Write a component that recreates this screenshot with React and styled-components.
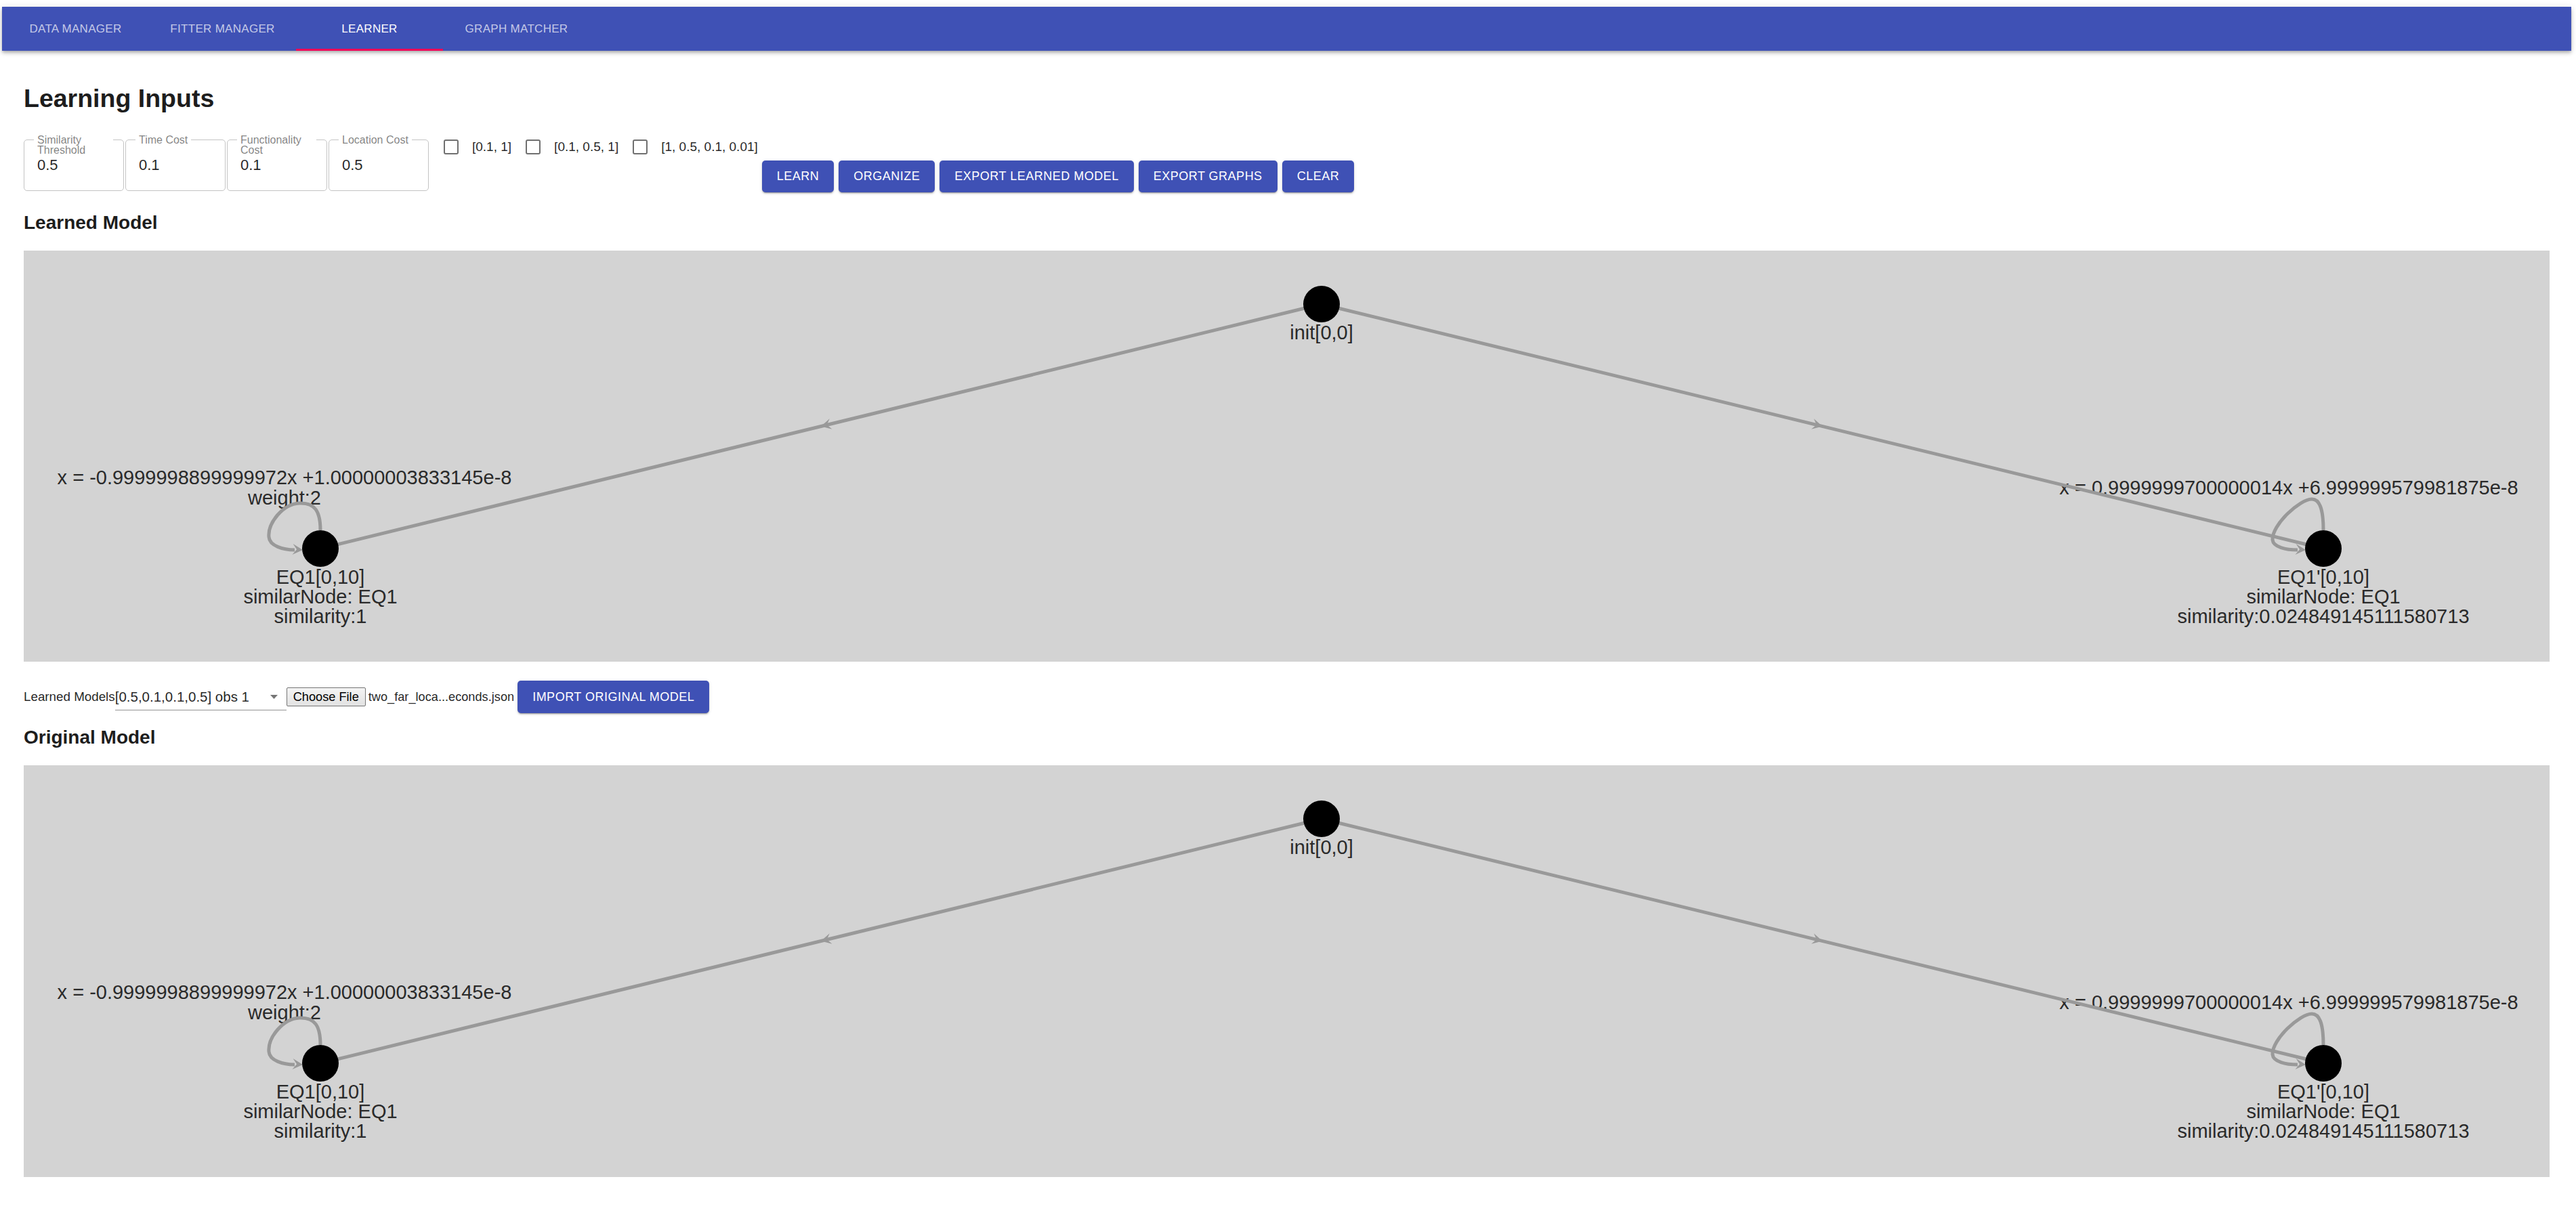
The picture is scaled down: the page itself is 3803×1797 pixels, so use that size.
import React from "react";
import styled, { createGlobalStyle } from "styled-components";

const GlobalStyle = createGlobalStyle`
  body {
    margin: 0;
    background: #fff;
    font-family: "Liberation Sans", Arial, sans-serif;
    color: rgba(0, 0, 0, 0.87);
  }
`;

const TABS = ["Data Manager", "Fitter Manager", "Learner", "Graph Matcher"];

const FIELDS = [
  { label: "Similarity Threshold", value: "0.5" },
  { label: "Time Cost", value: "0.1" },
  { label: "Functionality Cost", value: "0.1" },
  { label: "Location Cost", value: "0.5" },
];

const CHECKS = ["[0.1, 1]", "[0.1, 0.5, 1]", "[1, 0.5, 0.1, 0.01]"];

const ACTIONS = ["Learn", "Organize", "Export Learned Model", "Export Graphs", "Clear"];

const NODES = [
  { id: "init", x: 1916, y: 79, lines: ["init[0,0]"] },
  {
    id: "eq1",
    x: 438,
    y: 440,
    lines: ["EQ1[0,10]", "similarNode: EQ1", "similarity:1"],
    loop: "M 0 -27 C 0 -55, -8 -68, -31 -67 C -55 -66, -78 -38, -76 -17 C -75 -4, -55 2, -38 2",
  },
  {
    id: "eq1p",
    x: 3395,
    y: 440,
    lines: ["EQ1'[0,10]", "similarNode: EQ1", "similarity:0.024849145111580713"],
    loop: "M 0 -27 C 0 -60, -6 -73, -17 -73 C -35 -73, -76 -35, -75 -13 C -74 -2, -55 2, -38 2",
  },
];

const EDGES = [
  { from: "init", to: "eq1" },
  { from: "init", to: "eq1p" },
];

const EDGE_LABELS = [
  { x: 385, y: 345, lines: ["x = -0.9999998899999972x +1.00000003833145e-8", "weight:2"] },
  { x: 3344, y: 360, lines: ["x = 0.9999999700000014x +6.999999579981875e-8"] },
];

const Arrow = ({ x, y, angle }) => (
  <path
    d="M 0 0 L -15 -8 L -9 0 L -15 8 Z"
    fill="#999"
    transform={`translate(${x} ${y}) rotate(${angle})`}
  />
);

const Graph = () => {
  const byId = Object.fromEntries(NODES.map((n) => [n.id, n]));
  return (
    <Canvas>
      {EDGE_LABELS.map((l, i) => (
        <text key={i} x={l.x} y={l.y} textAnchor="middle">
          {l.lines.map((t, j) => (
            <tspan key={j} x={l.x} dy={j === 0 ? 0 : 30}>
              {t}
            </tspan>
          ))}
        </text>
      ))}
      {EDGES.map((e) => {
        const a = byId[e.from];
        const b = byId[e.to];
        const mx = (a.x + b.x) / 2;
        const my = (a.y + b.y) / 2;
        const ang = (Math.atan2(b.y - a.y, b.x - a.x) * 180) / Math.PI;
        return (
          <g key={e.to}>
            <line x1={a.x} y1={a.y} x2={b.x} y2={b.y} stroke="#999" strokeWidth="5" />
            <Arrow x={mx} y={my} angle={ang} />
          </g>
        );
      })}
      {NODES.filter((n) => n.loop).map((n) => (
        <g key={n.id} transform={`translate(${n.x} ${n.y})`}>
          <path d={n.loop} fill="none" stroke="#999" strokeWidth="5" />
          <Arrow x={-26} y={2} angle={4} />
        </g>
      ))}
      {NODES.map((n) => (
        <g key={n.id}>
          <circle cx={n.x} cy={n.y} r="27" fill="#000" />
          <text x={n.x} y={n.y + 52} textAnchor="middle">
            {n.lines.map((t, j) => (
              <tspan key={j} x={n.x} dy={j === 0 ? 0 : 29}>
                {t}
              </tspan>
            ))}
          </text>
        </g>
      ))}
    </Canvas>
  );
};

const App = () => {
  return (
    <>
      <GlobalStyle />
      <NavBar>
        {TABS.map((t) => (
          <Tab key={t} $active={t === "Learner"}>
            {t}
          </Tab>
        ))}
      </NavBar>
      <Main>
        <Title>Learning Inputs</Title>
        <InputsRow>
          <FieldGroup>
            {FIELDS.map((f) => (
              <Field key={f.label}>
                <FieldLabel>{f.label}</FieldLabel>
                <FieldValue>{f.value}</FieldValue>
              </Field>
            ))}
          </FieldGroup>
          <Checks>
            {CHECKS.map((c) => (
              <CheckItem key={c}>
                <CheckBox />
                {c}
              </CheckItem>
            ))}
          </Checks>
          <Actions>
            {ACTIONS.map((a) => (
              <Button key={a}>{a}</Button>
            ))}
          </Actions>
        </InputsRow>

        <SectionTitle>Learned Model</SectionTitle>
        <Panel>
          <Graph />
        </Panel>

        <ModelRow>
          <RowLabel>Learned Models</RowLabel>
          <Select>
            [0.5,0.1,0.1,0.5] obs 1
            <svg width="11" height="6" viewBox="0 0 11 6">
              <polygon points="0,0 11,0 5.5,6" fill="#757575" />
            </svg>
          </Select>
          <FileButton>Choose File</FileButton>
          <FileName>two_far_loca...econds.json</FileName>
          <Button $tall>Import Original Model</Button>
        </ModelRow>

        <SectionTitle $tight>Original Model</SectionTitle>
        <Panel $tall>
          <Graph />
        </Panel>
      </Main>
    </>
  );
};

const NavBar = styled.nav`
  display: flex;
  height: 65px;
  margin: 10px 7px 0 3px;
  background: #3f51b5;
  box-shadow: 0 2px 4px -1px rgba(0, 0, 0, 0.2), 0 4px 5px 0 rgba(0, 0, 0, 0.14),
    0 1px 10px 0 rgba(0, 0, 0, 0.12);
`;

const Tab = styled.div`
  position: relative;
  width: 217px;
  display: flex;
  align-items: center;
  justify-content: center;
  font-size: 17px;
  letter-spacing: 0.3px;
  text-transform: uppercase;
  color: ${(p) => (p.$active ? "#fff" : "rgba(255, 255, 255, 0.7)")};

  &::after {
    content: "";
    display: ${(p) => (p.$active ? "block" : "none")};
    position: absolute;
    left: 0;
    right: 0;
    bottom: 0;
    height: 3px;
    background: #f50057;
  }
`;

const Main = styled.main`
  padding: 49px 39px 0 35px;
`;

const Title = styled.h1`
  margin: 0;
  font-size: 37.5px;
  line-height: 42px;
  font-weight: 700;
  color: #1d1d1d;
`;

const InputsRow = styled.div`
  display: flex;
  align-items: flex-start;
  margin-top: 40px;
`;

const FieldGroup = styled.div`
  display: flex;
  gap: 2px;
`;

const Field = styled.div`
  position: relative;
  box-sizing: border-box;
  width: 148px;
  height: 76px;
  padding: 26px 0 0 19px;
  border: 1px solid #c4c4c4;
  border-radius: 5px;
`;

const FieldLabel = styled.label`
  position: absolute;
  top: -8px;
  left: 14px;
  max-width: 107px;
  padding: 0 5px;
  background: #fff;
  font-size: 16px;
  line-height: 15px;
  color: rgba(0, 0, 0, 0.5);
`;

const FieldValue = styled.div`
  font-size: 22px;
  line-height: 22px;
  color: rgba(0, 0, 0, 0.87);
`;

const Checks = styled.div`
  display: flex;
  gap: 21px;
  margin-left: 22px;
`;

const CheckItem = styled.label`
  display: flex;
  align-items: center;
  gap: 20px;
  font-size: 19px;
  color: rgba(0, 0, 0, 0.87);
`;

const CheckBox = styled.span`
  box-sizing: border-box;
  width: 22px;
  height: 22px;
  border: 2.5px solid #707070;
  border-radius: 3px;
`;

const Actions = styled.div`
  display: flex;
  gap: 7px;
  margin: 31px 0 0 6px;
`;

const Button = styled.button`
  height: ${(p) => (p.$tall ? "48px" : "47px")};
  padding: 0 22px;
  margin-left: ${(p) => (p.$tall ? "5px" : "0")};
  border: none;
  border-radius: 5px;
  background: #3f51b5;
  color: #fff;
  font-family: "Liberation Sans", Arial, sans-serif;
  font-size: 18px;
  letter-spacing: 0.5px;
  text-transform: uppercase;
  white-space: nowrap;
  box-shadow: 0 3px 1px -2px rgba(0, 0, 0, 0.2), 0 2px 2px 0 rgba(0, 0, 0, 0.14),
    0 1px 5px 0 rgba(0, 0, 0, 0.12);
`;

const SectionTitle = styled.h2`
  margin: ${(p) => (p.$tight ? "20px" : "29px")} 0 0;
  font-size: 28px;
  line-height: 32px;
  font-weight: 700;
  color: #1d1d1d;
`;

const Panel = styled.div`
  margin-top: 25px;
  height: ${(p) => (p.$tall ? "608px" : "607px")};
  background: #d3d3d3;
`;

const Canvas = styled.svg`
  display: block;
  width: 100%;
  height: 100%;
  font-family: "Liberation Sans", Arial, sans-serif;
  font-size: 29px;
  fill: #2a2a2a;
`;

const ModelRow = styled.div`
  display: flex;
  align-items: center;
  height: 48px;
  margin-top: 28px;
`;

const RowLabel = styled.span`
  font-size: 18.8px;
`;

const Select = styled.div`
  box-sizing: border-box;
  display: flex;
  align-items: center;
  justify-content: space-between;
  width: 253px;
  height: 40px;
  padding-right: 13px;
  border-bottom: 1px solid rgba(0, 0, 0, 0.42);
  font-size: 20.5px;
  white-space: nowrap;
`;

const FileButton = styled.button`
  height: 28px;
  padding: 0 9px;
  border: 1px solid #767676;
  border-radius: 2px;
  background: linear-gradient(#f4f4f4, #e2e2e2);
  font-family: "Liberation Sans", Arial, sans-serif;
  font-size: 18.2px;
  color: #000;
`;

const FileName = styled.span`
  margin-left: 4px;
  font-size: 18.2px;
`;

export default App;
